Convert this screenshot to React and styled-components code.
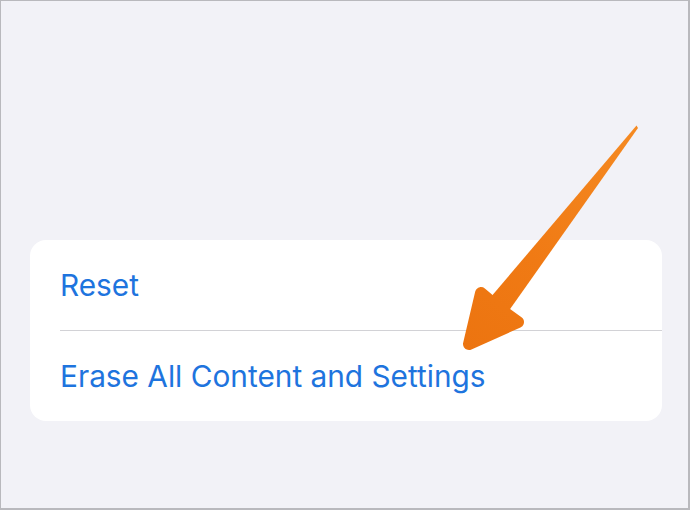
import React from "react";
import styled, { createGlobalStyle } from "styled-components";

const Global = createGlobalStyle`
  html, body { margin: 0; padding: 0; background: #f2f2f7; }
  * { box-sizing: border-box; }
`;

const Frame = styled.div`
  position: relative;
  width: 690px;
  height: 510px;
  background: #f2f2f7;
  border: 1px solid #b9b9bd;
  border-right-width: 2px;
  border-bottom-width: 2px;
  padding: 239px 26px 0 29px;
  font-family: Inter, "Noto Sans", sans-serif;
`;

const Card = styled.div`
  background: #ffffff;
  border-radius: 16px;
  display: flex;
  flex-direction: column;
`;

const Row = styled.div`
  height: 90px;
  display: flex;
  align-items: center;
  padding-left: 30px;
  font-size: 29.8px;
  letter-spacing: 0;
  color: #1e74de;
`;

const Separator = styled.div`
  height: 1px;
  margin-left: 30px;
  background: #d2d2d6;
`;

const Overlay = styled.svg`
  position: absolute;
  left: -1px;
  top: -1px;
  pointer-events: none;
`;

function Arrow() {
  return (
    <Overlay width="690" height="510" viewBox="0 0 690 510">
      <defs>
        <linearGradient id="ag" x1="636" y1="126" x2="466" y2="350" gradientUnits="userSpaceOnUse">
          <stop offset="0" stopColor="#f58a22" />
          <stop offset="0.6" stopColor="#f07a14" />
          <stop offset="1" stopColor="#ec7410" />
        </linearGradient>
      </defs>
      <path
        d="M636.5 125.5 L638 128 L508 312 L490 298 Z"
        fill="url(#ag)"
      />
      <path
        d="M481 293 L469 344 L518 322 L500 309 Z"
        fill="url(#ag)"
        stroke="url(#ag)"
        strokeWidth="12"
        strokeLinejoin="round"
        strokeLinecap="round"
      />
    </Overlay>
  );
}

export default function App() {
  return (
    <>
      <Global />
      <Frame>
        <Card>
          <Row>Reset</Row>
          <Separator />
          <Row>Erase All Content and Settings</Row>
        </Card>
        <Arrow />
      </Frame>
    </>
  );
}
